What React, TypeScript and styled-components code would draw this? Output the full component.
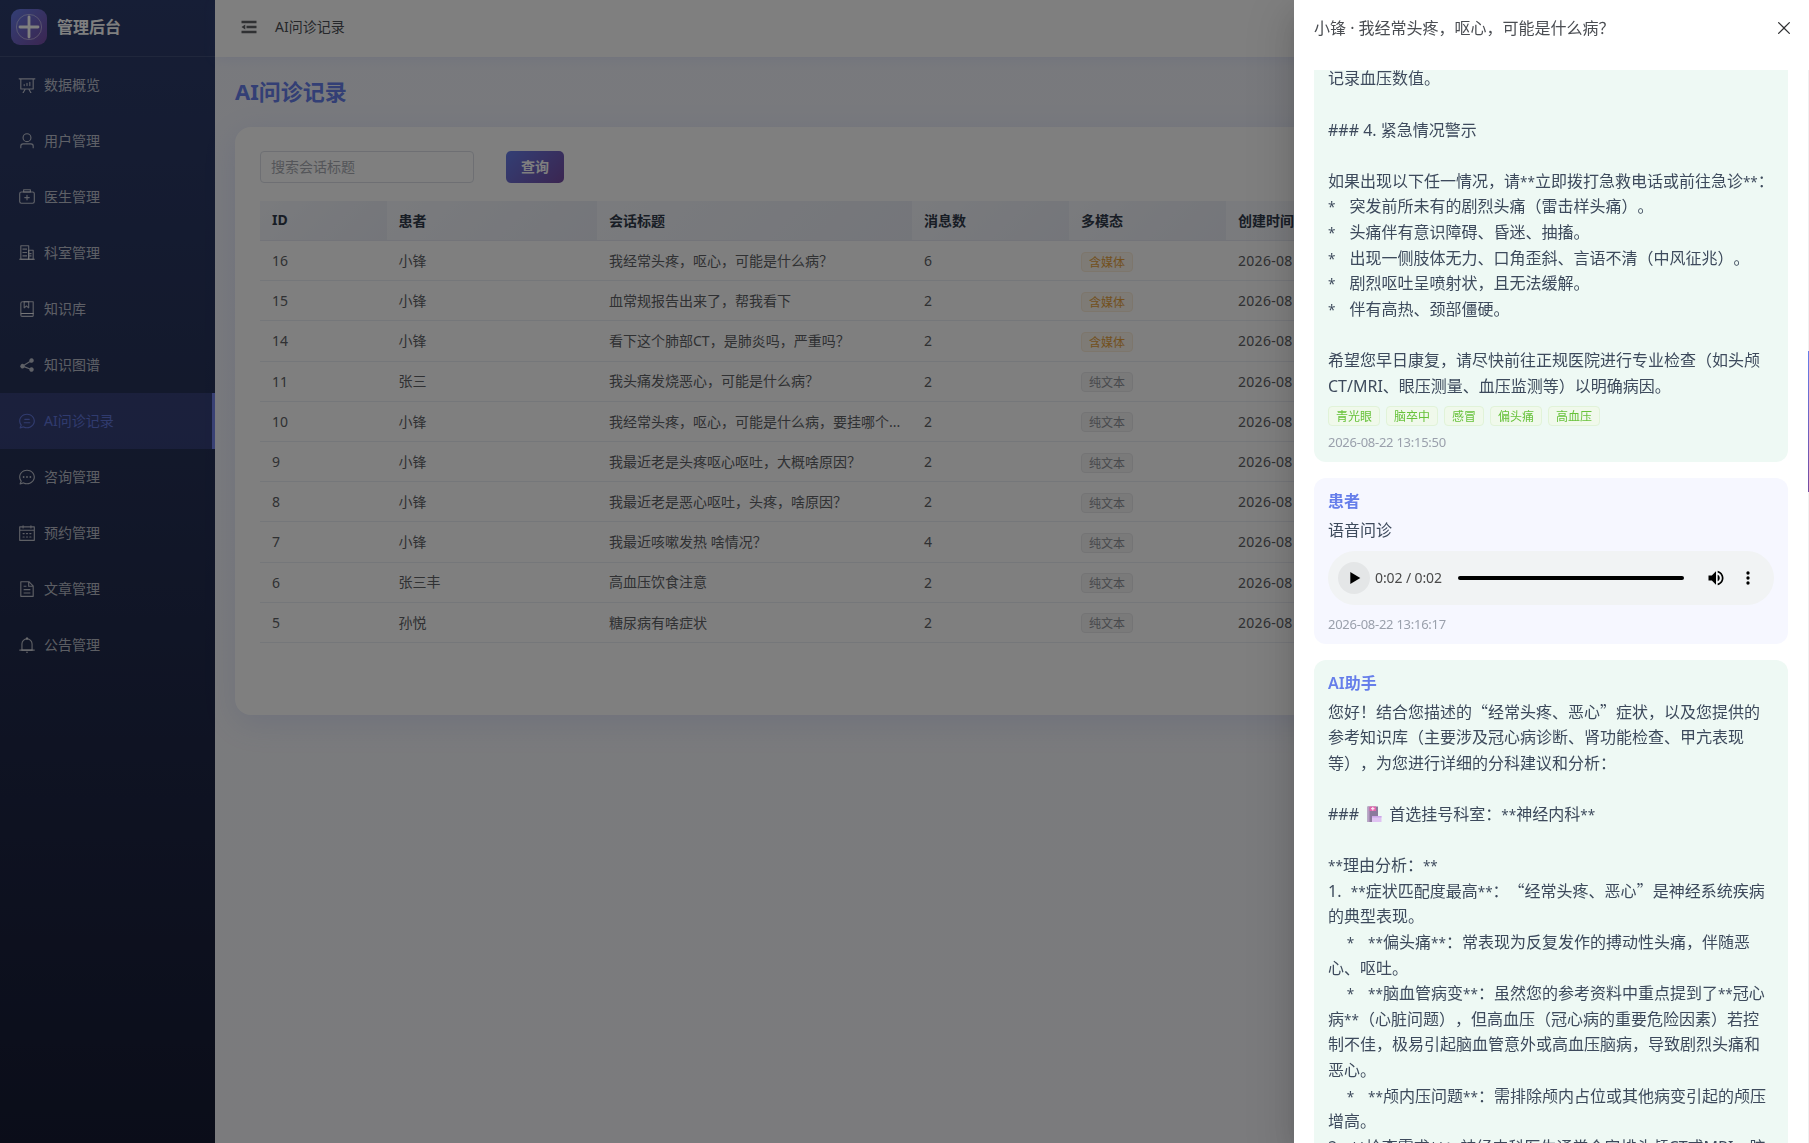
import React from 'react';
import styled, { createGlobalStyle, css } from 'styled-components';

const latin = '"Noto Sans", "Noto Sans CJK SC", sans-serif';

const GlobalStyle = createGlobalStyle`
  *, *::before, *::after { box-sizing: border-box; }
  html, body { margin: 0; padding: 0; height: 100%; overflow: hidden; }
  body {
    font-family: ${latin};
    font-size: 14px;
    color: #606266;
    text-spacing-trim: space-all;
  }
`;

/* ---------- icons ---------- */

const icons = {
  data: ['m665.216 768 110.848 192h-73.856L591.36 768H433.024L322.176 960H248.32l110.848-192H160a32 32 0 0 1-32-32V192H64a32 32 0 0 1 0-64h896a32 32 0 1 1 0 64h-64v544a32 32 0 0 1-32 32zM832 192H192v512h640zM352 448a32 32 0 0 1 32 32v64a32 32 0 0 1-64 0v-64a32 32 0 0 1 32-32m160-64a32 32 0 0 1 32 32v128a32 32 0 0 1-64 0V416a32 32 0 0 1 32-32m160-64a32 32 0 0 1 32 32v192a32 32 0 1 1-64 0V352a32 32 0 0 1 32-32'],
  user: ['M512 512a192 192 0 1 0 0-384 192 192 0 0 0 0 384m0 64a256 256 0 1 1 0-512 256 256 0 0 1 0 512m320 320v-96a96 96 0 0 0-96-96H288a96 96 0 0 0-96 96v96a32 32 0 1 1-64 0v-96a160 160 0 0 1 160-160h448a160 160 0 0 1 160 160v96a32 32 0 1 1-64 0'],
  kit: [
    'M192 256a64 64 0 0 0-64 64v448a64 64 0 0 0 64 64h640a64 64 0 0 0 64-64V320a64 64 0 0 0-64-64zm0-64h640a128 128 0 0 1 128 128v448a128 128 0 0 1-128 128H192A128 128 0 0 1 64 768V320a128 128 0 0 1 128-128',
    'M544 512h96a32 32 0 0 1 0 64h-96v96a32 32 0 0 1-64 0v-96h-96a32 32 0 0 1 0-64h96v-96a32 32 0 0 1 64 0zM352 128v64h320v-64zm-32-64h384a32 32 0 0 1 32 32v128a32 32 0 0 1-32 32H320a32 32 0 0 1-32-32V96a32 32 0 0 1 32-32',
  ],
  office: [
    'M192 128v704h384V128zm-32-64h448a32 32 0 0 1 32 32v768a32 32 0 0 1-32 32H160a32 32 0 0 1-32-32V96a32 32 0 0 1 32-32',
    'M256 256h256v64H256zm0 192h256v64H256zm0 192h256v64H256zm384-128h128v64H640zm0 128h128v64H640zM64 832h896v64H64z',
    'M640 384v448h192V384zm-32-64h256a32 32 0 0 1 32 32v512a32 32 0 0 1-32 32H608a32 32 0 0 1-32-32V352a32 32 0 0 1 32-32',
  ],
  collection: [
    'M192 736h640V128H256a64 64 0 0 0-64 64zm64-672h608a32 32 0 0 1 32 32v672a32 32 0 0 1-32 32H160l-32 57.536V192A128 128 0 0 1 256 64',
    'M240 800a48 48 0 1 0 0 96h592v-96zm0-64h656v160a64 64 0 0 1-64 64H240a112 112 0 0 1 0-224m144-608v250.88l96-76.8 96 76.8V128zm-64-64h320v381.44a32 32 0 0 1-51.968 24.96L480 384l-108.032 86.4A32 32 0 0 1 320 445.44z',
  ],
  share: ['m679.872 348.8-301.76 188.608a127.8 127.8 0 0 1 5.12 52.16l279.936 104.96a128 128 0 1 1-22.464 59.904l-279.872-104.96a128 128 0 1 1-16.64-166.272l301.696-188.608a128 128 0 1 1 33.92 54.272z'],
  chatLine: [
    'm174.72 855.68 135.296-45.12 23.68 11.84C388.096 849.536 448.576 864 512 864c211.84 0 384-166.784 384-352S723.84 160 512 160 128 326.784 128 512c0 69.12 24.96 139.264 70.848 199.232l22.08 28.8-46.272 115.584zm-45.248 82.56A32 32 0 0 1 89.6 896l58.368-145.92C94.72 680.32 64 596.864 64 512 64 299.904 256 96 512 96s448 203.904 448 416-192 416-448 416a461.06 461.06 0 0 1-206.912-48.384l-175.616 58.56z',
    'M352 576h320q32 0 32 32t-32 32H352q-32 0-32-32t32-32m32-192h256q32 0 32 32t-32 32H384q-32 0-32-32t32-32',
  ],
  chatDot: [
    'm174.72 855.68 135.296-45.12 23.68 11.84C388.096 849.536 448.576 864 512 864c211.84 0 384-166.784 384-352S723.84 160 512 160 128 326.784 128 512c0 69.12 24.96 139.264 70.848 199.232l22.08 28.8-46.272 115.584zm-45.248 82.56A32 32 0 0 1 89.6 896l58.368-145.92C94.72 680.32 64 596.864 64 512 64 299.904 256 96 512 96s448 203.904 448 416-192 416-448 416a461.06 461.06 0 0 1-206.912-48.384l-175.616 58.56z',
    'M512 563.2a51.2 51.2 0 1 1 0-102.4 51.2 51.2 0 0 1 0 102.4m192 0a51.2 51.2 0 1 1 0-102.4 51.2 51.2 0 0 1 0 102.4m-384 0a51.2 51.2 0 1 1 0-102.4 51.2 51.2 0 0 1 0 102.4',
  ],
  calendar: ['M128 384v512h768V192H768v32a32 32 0 1 1-64 0v-32H320v32a32 32 0 0 1-64 0v-32H128v128h768v64zm192-256h384V96a32 32 0 1 1 64 0v32h160a32 32 0 0 1 32 32v768a32 32 0 0 1-32 32H96a32 32 0 0 1-32-32V160a32 32 0 0 1 32-32h160V96a32 32 0 0 1 64 0zm-32 384h64a32 32 0 0 1 0 64h-64a32 32 0 0 1 0-64m0 192h64a32 32 0 1 1 0 64h-64a32 32 0 1 1 0-64m192-192h64a32 32 0 0 1 0 64h-64a32 32 0 0 1 0-64m0 192h64a32 32 0 1 1 0 64h-64a32 32 0 1 1 0-64m192-192h64a32 32 0 1 1 0 64h-64a32 32 0 1 1 0-64m0 192h64a32 32 0 1 1 0 64h-64a32 32 0 1 1 0-64'],
  document: ['M832 384H576V128H192v768h640zm-26.496-64L640 154.496V320zM160 64h480l256 256v608a32 32 0 0 1-32 32H160a32 32 0 0 1-32-32V96a32 32 0 0 1 32-32m160 448h384v64H320zm0-192h160v64H320zm0 384h384v64H320z'],
  bell: [
    'M512 64a64 64 0 0 1 64 64v64H448v-64a64 64 0 0 1 64-64',
    'M256 768h512V448a256 256 0 1 0-512 0zm256-640a320 320 0 0 1 320 320v384H192V448a320 320 0 0 1 320-320',
    'M96 768h832q32 0 32 32t-32 32H96q-32 0-32-32t32-32m352 128h128a64 64 0 0 1-128 0',
  ],
  fold: ['M896 192H128v128h768zm0 256H384v128h512zm0 256H128v128h768zM320 384 128 512l192 128z'],
  close: ['M764.288 214.592 512 466.88 259.712 214.592a31.936 31.936 0 0 0-45.12 45.12L466.752 512 214.528 764.224a31.936 31.936 0 1 0 45.12 45.184L512 557.184l252.288 252.288a31.936 31.936 0 0 0 45.12-45.12L557.12 512.064l252.288-252.352a31.936 31.936 0 1 0-45.12-45.184z'],
};

type IconName = keyof typeof icons;

const Icon = ({ name, size }: { name: IconName; size: number }) => (
  <svg width={size} height={size} viewBox="0 0 1024 1024" fill="currentColor">
    {icons[name].map((d) => (
      <path key={d} d={d} />
    ))}
  </svg>
);

/* ---------- shell ---------- */

const Shell = styled.div`
  display: flex;
  width: 100vw;
  height: 100vh;
  overflow: hidden;
  background: #fff;
`;

const Sidebar = styled.aside`
  flex: 0 0 215px;
  display: flex;
  flex-direction: column;
  background: linear-gradient(180deg, #2d3c6c 0%, #263258 35%, #1d2544 70%, #161b33 100%);
`;

const Brand = styled.div`
  display: flex;
  align-items: center;
  height: 57px;
  padding: 0 11px 2px;
  gap: 10px;
  border-bottom: 1px solid rgba(255, 255, 255, 0.1);
`;

const BrandMark = styled.div`
  display: grid;
  place-items: center;
  width: 36px;
  height: 36px;
  border-radius: 9px;
  background: linear-gradient(135deg, #667eea 0%, #764ba2 100%);
`;

const BrandName = styled.span`
  margin-top: -2px;
  font-size: 16px;
  font-weight: 600;
  color: #fff;
`;

const NavItem = styled.a<{ $active?: boolean }>`
  display: flex;
  align-items: center;
  height: 56px;
  padding-left: 15px;
  gap: 5px;
  font-size: 14px;
  color: rgba(255, 255, 255, 0.7);
  border-right: 3px solid transparent;
  ${(p) =>
    p.$active &&
    css`
      color: #6176dc;
      background: rgba(106, 118, 234, 0.23);
      border-right-color: #7383ea;
    `}
`;

const NavIcon = styled.span`
  display: grid;
  place-items: center;
  width: 24px;
`;

const NavLabel = styled.span`
  margin-top: -2px;
`;

const Main = styled.main`
  flex: 1;
  min-width: 0;
  display: flex;
  flex-direction: column;
  background: linear-gradient(180deg, #f1f3fb 0%, #f5f6fa 60%, #f6f7fa 100%);
`;

const TopBar = styled.header`
  display: flex;
  align-items: center;
  height: 57px;
  padding: 0 24px 3px;
  gap: 16px;
  font-size: 14px;
  color: #4c4f55;
  background: #fff;
  box-shadow: 0 2px 12px rgba(102, 126, 234, 0.1);
`;

const FoldButton = styled.span`
  display: flex;
  color: #606266;
`;

const Crumb = styled.span`
  margin-top: -2px;
`;

const PageTitle = styled.h2`
  margin: 0;
  padding: 16px 20px 18px;
  font-size: 22px;
  line-height: 36px;
  font-weight: 700;
  color: #667eea;
`;

const Card = styled.section`
  display: flex;
  flex-direction: column;
  gap: 18px;
  height: 588px;
  margin: 0 20px;
  padding: 24px 25px;
  border-radius: 16px;
  background: #fff;
  box-shadow: 0 8px 32px rgba(102, 126, 234, 0.15);
`;

const Filters = styled.div`
  display: flex;
  gap: 32px;
  height: 32px;
`;

const SearchBox = styled.div`
  display: flex;
  align-items: center;
  width: 214px;
  padding: 0 10px 2px;
  border: 1px solid #dcdfe6;
  border-radius: 4px;
  color: #a8abb2;
`;

const QueryButton = styled.button`
  width: 58px;
  padding: 0 0 2px;
  border: 0;
  border-radius: 5px;
  font: 600 14px ${latin};
  color: #fff;
  background: linear-gradient(135deg, #667eea 0%, #764ba2 100%);
`;

const Table = styled.div`
  width: 1500px;
`;

const TableWrap = styled.div`
  overflow: hidden;
`;

const columns = '126.5px 210.5px 315px 157px 157px 1fr';

const HeadRow = styled.div`
  display: grid;
  grid-template-columns: ${columns};
  height: 40px;
`;

const HeadCell = styled.div`
  display: flex;
  align-items: center;
  padding: 0 12px 2px;
  font-weight: 700;
  color: #303a4a;
  background: linear-gradient(135deg, #f5f7fc 0%, #e9ecf5 100%);
  border-bottom: 1px solid #e6e9f2;
`;

const Row = styled.div`
  display: grid;
  grid-template-columns: ${columns};
  height: 40.2px;
  border-bottom: 1px solid #ebeef5;
`;

const Cell = styled.div<{ $kind?: 'text' | 'date' }>`
  display: flex;
  align-items: center;
  padding: 0 12px ${(p) => (p.$kind === 'text' ? 1.5 : 0)}px;
  white-space: nowrap;
  letter-spacing: ${(p) => (p.$kind === 'date' ? 0.3 : 0)}px;
`;

type Tone = 'warning' | 'info' | 'success';
const tones = {
  warning: ['#e6a23c', '#fdf6ec', '#faecd8'],
  info: ['#909399', '#f4f4f5', '#e9e9eb'],
  success: ['#67c23a', '#f0f9eb', '#e1f3d8'],
};

const Tag = styled.span<{ $tone: Tone }>`
  display: inline-flex;
  align-items: center;
  height: 20px;
  padding: 1px 7px 0;
  border: 1px solid ${(p) => tones[p.$tone][2]};
  border-radius: 4px;
  font-size: 12px;
  line-height: 1;
  color: ${(p) => tones[p.$tone][0]};
  background: ${(p) => tones[p.$tone][1]};
`;

const RowTag = styled(Tag)`
  margin-top: 2px;
  padding-top: 2px;
`;

/* ---------- drawer ---------- */

const Overlay = styled.div`
  position: fixed;
  inset: 0;
  display: flex;
  justify-content: flex-end;
  background: rgba(0, 0, 0, 0.5);
`;

const Drawer = styled.div`
  display: flex;
  flex-direction: column;
  width: 515px;
  background: #fff;
  box-shadow: 0 16px 48px 16px rgba(0, 0, 0, 0.08), 0 12px 32px rgba(0, 0, 0, 0.12), 0 8px 16px -8px rgba(0, 0, 0, 0.16);
`;

const DrawerHead = styled.header`
  flex: 0 0 70px;
  display: flex;
  justify-content: space-between;
  align-items: flex-start;
  padding: 16px 15px 0 20px;
  font-size: 16px;
  line-height: 24px;
  color: #4a4d52;
`;

const CloseButton = styled.span`
  display: flex;
  padding-top: 2px;
  color: #303133;
`;

const DrawerBody = styled.div`
  flex: 1;
  min-height: 0;
  display: flex;
  overflow: hidden;
`;

const Messages = styled.div`
  flex: 1;
  min-width: 0;
  display: flex;
  flex-direction: column;
  justify-content: flex-start;
  gap: 16px;
  padding: 0 20px;
`;

const ScrollTrack = styled.div`
  flex: 0 0 1px;
  padding-top: 281px;
  background: #f1f1f1;
`;

const ScrollThumb = styled.div`
  height: 141px;
  background: linear-gradient(180deg, #667eea, #764ba2);
`;

const Bubble = styled.article<{ $ai?: boolean; $cut?: boolean }>`
  flex: none;
  padding: 12px 14px;
  border-radius: 12px;
  background: ${(p) => (p.$ai ? '#eef9f4' : '#f6f7ff')};
  ${(p) =>
    p.$cut &&
    css`
      margin-top: -15.6px;
    `}
`;

const Author = styled.div`
  height: 22px;
  margin-bottom: 6px;
  font-size: 16px;
  line-height: 22px;
  font-weight: 600;
  color: #667eea;
`;

const Body = styled.div`
  font-size: 16px;
  line-height: 25.6px;
  color: #3d4a5c;
  white-space: pre;
`;

const Quote = styled.span`
  font-family: 'Noto Sans CJK SC', sans-serif;
  line-height: 1;
`;

const Stars = styled.span`
  font-size: 13.5px;
  line-height: 1;
`;

const Gap = styled.span`
  word-spacing: 0.5px;
`;

const Tags = styled.div`
  display: flex;
  gap: 6px;
  margin-top: 7px;
`;

const Time = styled.time`
  display: block;
  margin-top: 8px;
  font-size: 13px;
  line-height: 16px;
  letter-spacing: -0.26px;
  color: #9aa0ac;
`;

const Player = styled.div`
  display: flex;
  align-items: center;
  height: 54px;
  margin: 7px 0 11px;
  padding: 0 16px 0 10px;
  border-radius: 27px;
  background: #f1f3f4;
`;

const PlayButton = styled.span`
  display: grid;
  place-items: center;
  width: 32px;
  height: 32px;
  border-radius: 50%;
  background: #e4e6e7;
`;

const Elapsed = styled.span`
  width: 83px;
  margin-left: 5px;
  font-size: 14px;
  letter-spacing: -0.1px;
  color: #4a4a4a;
`;

const Progress = styled.span`
  width: 226px;
  height: 4px;
  border-radius: 2px;
  background: #000;
`;

const PlayerIcons = styled.span`
  display: flex;
  flex: 1;
  justify-content: flex-end;
  gap: 12px;
`;

const HospitalMark = styled.svg`
  vertical-align: -2px;
`;

const Hospital = () => (
  <HospitalMark width="22" height="16" viewBox="0 0 22 16">
    <path d="M4.500 0.500h10.500v15.500H4.500z" fill="#8b7a9c" />
    <path d="M4.500 0.500h2v15.500h-2z" fill="#b79fc4" />
    <path d="M6.500 0.500h6.500v4.500H6.500z" fill="#e264ab" />
    <path d="M9.200 1h1.200v3.400H9.200zM8.100 2.100h3.400v1.200H8.100z" fill="#fbe3f2" />
    <path d="M9 10h9.500v6H9z" fill="#e0c3f2" />
    <path d="M9 10h9.500v1.500H9z" fill="#cda6e8" />
  </HospitalMark>
);

const Rich = ({ text }: { text: string }) => (
  <Body>
    {text.split(/([“”]|🏥|\*+| {2,})/).map((part, i) => {
      if (part === '🏥') return <Hospital key={i} />;
      if (part === '“' || part === '”') return <Quote key={i}>{part}</Quote>;
      if (part.startsWith('*')) return <Stars key={i}>{part}</Stars>;
      if (part.startsWith('  ')) return <Gap key={i}>{part}</Gap>;
      return part;
    })}
  </Body>
);

/* ---------- data ---------- */

const nav: [IconName, string][] = [
  ['data', '数据概览'],
  ['user', '用户管理'],
  ['kit', '医生管理'],
  ['office', '科室管理'],
  ['collection', '知识库'],
  ['share', '知识图谱'],
  ['chatLine', 'AI问诊记录'],
  ['chatDot', '咨询管理'],
  ['calendar', '预约管理'],
  ['document', '文章管理'],
  ['bell', '公告管理'],
];

const heads = ['ID', '患者', '会话标题', '消息数', '多模态', '创建时间'];

const rows: [number, string, string, number, boolean][] = [
  [16, '小锋', '我经常头疼，呕心，可能是什么病？', 6, true],
  [15, '小锋', '血常规报告出来了，帮我看下', 2, true],
  [14, '小锋', '看下这个肺部CT，是肺炎吗，严重吗？', 2, true],
  [11, '张三', '我头痛发烧恶心，可能是什么病？', 2, false],
  [10, '小锋', '我经常头疼，呕心，可能是什么病，要挂哪个...', 2, false],
  [9, '小锋', '我最近老是头疼呕心呕吐，大概啥原因？', 2, false],
  [8, '小锋', '我最近老是恶心呕吐，头疼，啥原因？', 2, false],
  [7, '小锋', '我最近咳嗽发热 啥情况？', 4, false],
  [6, '张三丰', '高血压饮食注意', 2, false],
  [5, '孙悦', '糖尿病有啥症状', 2, false],
];

const firstReply = `记录血压数值。

### 4. 紧急情况警示

如果出现以下任一情况，请**立即拨打急救电话或前往急诊**：
*   突发前所未有的剧烈头痛（雷击样头痛）。
*   头痛伴有意识障碍、昏迷、抽搐。
*   出现一侧肢体无力、口角歪斜、言语不清（中风征兆）。
*   剧烈呕吐呈喷射状，且无法缓解。
*   伴有高热、颈部僵硬。

希望您早日康复，请尽快前往正规医院进行专业检查（如头颅
CT/MRI、眼压测量、血压监测等）以明确病因。`;

const secondReply = `您好！结合您描述的“经常头疼、恶心”症状，以及您提供的
参考知识库（主要涉及冠心病诊断、肾功能检查、甲亢表现
等），为您进行详细的分科建议和分析：

### 🏥 首选挂号科室：**神经内科**

**理由分析：**
1.  **症状匹配度最高**：“经常头疼、恶心”是神经系统疾病
的典型表现。
    *   **偏头痛**：常表现为反复发作的搏动性头痛，伴随恶
心、呕吐。
    *   **脑血管病变**：虽然您的参考资料中重点提到了**冠心
病**（心脏问题），但高血压（冠心病的重要危险因素）若控
制不佳，极易引起脑血管意外或高血压脑病，导致剧烈头痛和
恶心。
    *   **颅内压问题**：需排除颅内占位或其他病变引起的颅压
增高。
2.  **检查需求**：神经内科医生通常会安排头颅CT或MRI、脑`;

export default function App() {
  return (
    <>
      <GlobalStyle />
      <Shell>
        <Sidebar>
          <Brand>
            <BrandMark>
              <svg width="28" height="28" viewBox="0 0 28 28" fill="none" stroke="#fff">
                <circle cx="14" cy="14" r="12.6" strokeOpacity="0.45" />
                <path d="M14 4v20M5 14h18" strokeWidth="2.8" strokeLinecap="round" />
              </svg>
            </BrandMark>
            <BrandName>管理后台</BrandName>
          </Brand>
          {nav.map(([icon, label]) => (
            <NavItem key={label} $active={icon === 'chatLine'}>
              <NavIcon>
                <Icon name={icon} size={18} />
              </NavIcon>
              <NavLabel>{label}</NavLabel>
            </NavItem>
          ))}
        </Sidebar>
        <Main>
          <TopBar>
            <FoldButton>
              <Icon name="fold" size={20} />
            </FoldButton>
            <Crumb>AI问诊记录</Crumb>
          </TopBar>
          <PageTitle>AI问诊记录</PageTitle>
          <Card>
            <Filters>
              <SearchBox>搜索会话标题</SearchBox>
              <QueryButton>查询</QueryButton>
            </Filters>
            <TableWrap>
              <Table>
                <HeadRow>
                  {heads.map((h) => (
                    <HeadCell key={h}>{h}</HeadCell>
                  ))}
                </HeadRow>
                {rows.map(([id, patient, title, count, media]) => (
                  <Row key={id}>
                    <Cell>{id}</Cell>
                    <Cell $kind="text">{patient}</Cell>
                    <Cell $kind="text">{title}</Cell>
                    <Cell>{count}</Cell>
                    <Cell>
                      <RowTag $tone={media ? 'warning' : 'info'}>{media ? '含媒体' : '纯文本'}</RowTag>
                    </Cell>
                    <Cell $kind="date">2026-08</Cell>
                  </Row>
                ))}
              </Table>
            </TableWrap>
          </Card>
        </Main>
      </Shell>
      <Overlay>
        <Drawer>
          <DrawerHead>
            小锋 · 我经常头疼，呕心，可能是什么病？
            <CloseButton>
              <Icon name="close" size={20} />
            </CloseButton>
          </DrawerHead>
          <DrawerBody>
            <Messages>
              <Bubble $ai $cut>
                <Rich text={firstReply} />
                <Tags>
                  {['青光眼', '脑卒中', '感冒', '偏头痛', '高血压'].map((t) => (
                    <Tag key={t} $tone="success">
                      {t}
                    </Tag>
                  ))}
                </Tags>
                <Time>2026-08-22 13:15:50</Time>
              </Bubble>
              <Bubble>
                <Author>患者</Author>
                <Rich text="语音问诊" />
                <Player>
                  <PlayButton>
                    <svg width="24" height="24" viewBox="0 0 24 24">
                      <path d="M8.3 6v12l10-6z" />
                    </svg>
                  </PlayButton>
                  <Elapsed>0:02 / 0:02</Elapsed>
                  <Progress />
                  <PlayerIcons>
                    <svg width="20" height="20" viewBox="0 0 24 24">
                      <path d="M3 9v6h4l5 5V4L7 9zm13.500 3c0-1.770-1.020-3.290-2.500-4.030v8.050c1.480-.73 2.500-2.250 2.500-4.020M14 3.230v2.060c2.890.86 5 3.540 5 6.710s-2.110 5.850-5 6.710v2.060c4.010-.91 7-4.490 7-8.770s-2.990-7.860-7-8.770" />
                    </svg>
                    <svg width="20" height="20" viewBox="0 0 24 24">
                      <path d="M12 8a2 2 0 1 0 0-4 2 2 0 0 0 0 4m0 2a2 2 0 1 0 0 4 2 2 0 0 0 0-4m0 6a2 2 0 1 0 0 4 2 2 0 0 0 0-4" />
                    </svg>
                  </PlayerIcons>
                </Player>
                <Time>2026-08-22 13:16:17</Time>
              </Bubble>
              <Bubble $ai>
                <Author>AI助手</Author>
                <Rich text={secondReply} />
              </Bubble>
            </Messages>
            <ScrollTrack>
              <ScrollThumb />
            </ScrollTrack>
          </DrawerBody>
        </Drawer>
      </Overlay>
    </>
  );
}
